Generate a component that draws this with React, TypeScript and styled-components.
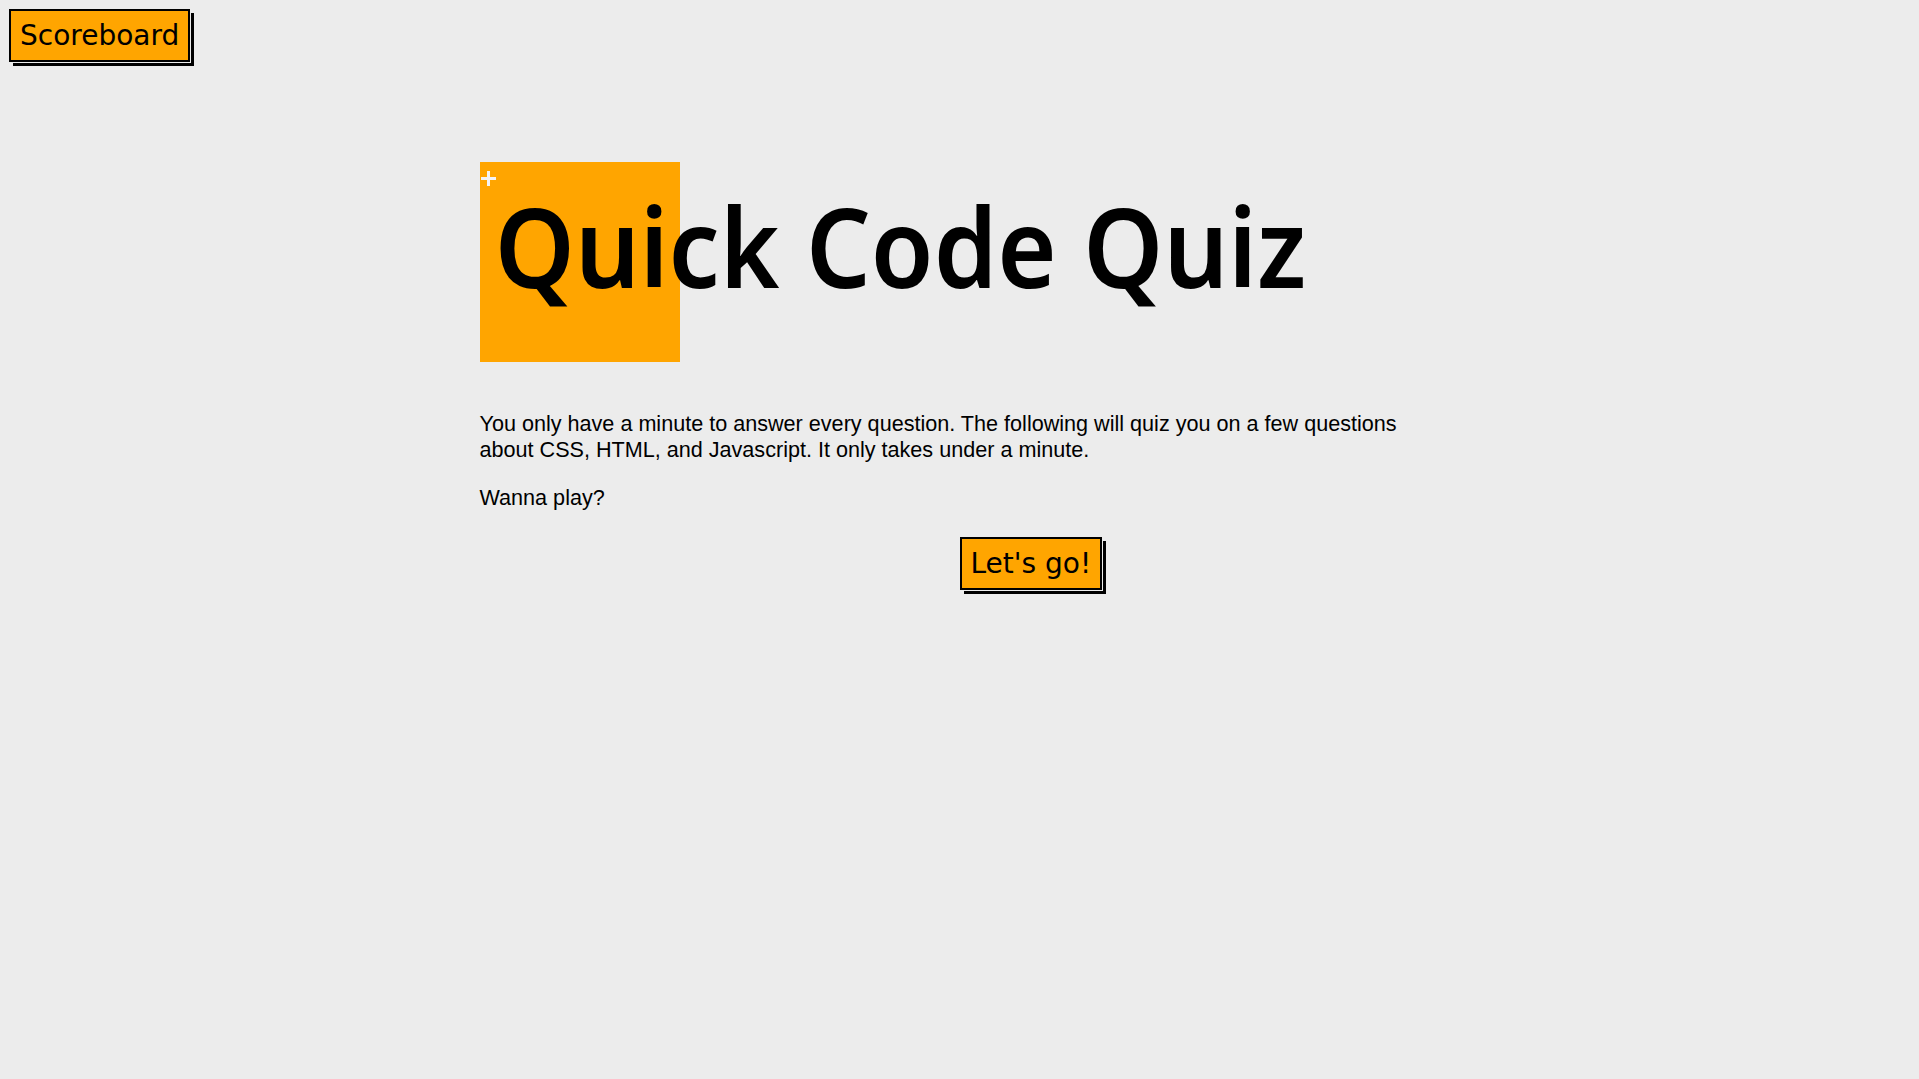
import React from "react";
import styled, { createGlobalStyle } from "styled-components";

const GlobalStyle = createGlobalStyle`
  html, body { margin: 0; padding: 0; }
  body { background: #ececec; color: #000; }
`;

const Page = styled.div`
  min-height: 100vh;
`;

const Header = styled.header`
  display: flex;
  padding: 9px;
`;

const ShadowButton = styled.button`
  font-family: "DejaVu Sans", Verdana, sans-serif;
  font-size: 28px;
  line-height: normal;
  color: #000;
  background: #ffa500;
  border: 2px solid #000;
  border-radius: 0;
  padding: 8px 9px;
  margin: 0;
  box-shadow: 1px 1px 0 0 #ececec, 4px 4px 0 0 #000;
  cursor: pointer;
`;

const Main = styled.main`
  width: 960px;
  margin: 91px auto 0;
`;

const Hero = styled.section`
  display: grid;
  & > * {
    grid-area: 1 / 1;
  }
`;

const Badge = styled.div`
  width: 200px;
  height: 200px;
  background: #ffa500;
  justify-self: start;
  padding: 9px 0 0 1px;
  box-sizing: border-box;
`;

const Title = styled.h1`
  margin: 0;
  padding: 28px 0 0 16px;
  font-family: "Noto Sans", "Open Sans", sans-serif;
  font-weight: 650;
  font-size: 110px;
  line-height: 1;
  white-space: nowrap;
  color: #000;
  transform: scaleX(0.925);
  transform-origin: 0 0;
`;

const Text = styled.p<{ $gap: number }>`
  margin: ${(p) => p.$gap}px 0 0;
  font-family: "Liberation Sans", Arial, sans-serif;
  font-size: 21.6px;
  line-height: normal;
  color: #000;
`;

const StartRow = styled.div`
  display: flex;
  padding-left: 50%;
  margin-top: 26px;
`;

const Plus = () => (
  <svg width="15" height="15" viewBox="0 0 15 15" aria-hidden="true">
    <path d="M7.5 0v15M0 7.5h15" stroke="#f4f4f4" strokeWidth="3" />
  </svg>
);

export default function App() {
  return (
    <Page>
      <GlobalStyle />
      <Header>
        <ShadowButton>Scoreboard</ShadowButton>
      </Header>
      <Main>
        <Hero>
          <Badge>
            <Plus />
          </Badge>
          <Title>Quick Code Quiz</Title>
        </Hero>
        <Text $gap={49}>
          You only have a minute to answer every question. The following will
          quiz you on a few questions about CSS, HTML, and Javascript. It only
          takes under a minute.
        </Text>
        <Text $gap={22}>Wanna play?</Text>
        <StartRow>
          <ShadowButton>Let's go!</ShadowButton>
        </StartRow>
      </Main>
    </Page>
  );
}
